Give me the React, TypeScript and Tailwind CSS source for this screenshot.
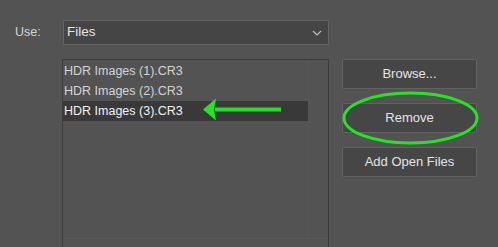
import React from 'react';

const files = ['HDR Images (1).CR3', 'HDR Images (2).CR3', 'HDR Images (3).CR3'];

export default function App() {
  const selected = 2;

  return (
    <div
      className="w-[498px] h-[247px] bg-[#535353] overflow-hidden text-[#d4d4d4] text-[12.5px]"
      style={{ fontFamily: '"Liberation Sans", Arial, sans-serif' }}
    >
      {/* Use row */}
      <div className="flex items-center pt-[20px]">
        <div className="w-[63px] pl-[15px]">Use:</div>
        <div className="w-[266px] h-[25px] bg-[#454545] border border-[#626262] flex items-center justify-between pl-[3px] pr-[6px] text-[13.5px] text-[#e6e6e6]">
          <span>Files</span>
          <svg width="10" height="6" viewBox="0 0 10 6" fill="none">
            <path d="M1 1l4 4 4-4" stroke="#bdbdbd" strokeWidth="1.2" />
          </svg>
        </div>
      </div>

      <div className="flex mt-[14px]">
        {/* File list */}
        <div className="ml-[62px] w-[267px] h-[200px] border border-[#3d3d3d] flex flex-col relative">
          <div className="flex-1 flex">
            <div className="w-[245px] pt-[1px]">
              {files.map((f, i) => (
                <div
                  key={f}
                  className={`h-[20px] flex items-center pl-[1px] ${
                    i === selected ? 'bg-[#393939] text-[#f2f2f2]' : ''
                  }`}
                >
                  {f}
                </div>
              ))}
            </div>
            <div className="flex-1 border-l border-[#575757]" />
          </div>
          <div className="h-[20px] border-t border-[#575757]" />

          {/* green arrow */}
          <svg className="absolute left-[138px] top-[37px]" width="82" height="26" viewBox="0 0 82 26">
            <path d="M80 12.5H14" stroke="#1ee81e" strokeWidth="4" />
            <path d="M2 12.5L15 1.5L13 12.5L15 23.5Z" fill="#1ee81e" />
          </svg>
        </div>

        {/* Buttons */}
        <div className="ml-[13px] w-[135px] flex flex-col gap-[14px] relative">
          {['Browse...', 'Remove', 'Add Open Files'].map((b) => (
            <button
              key={b}
              className="h-[30px] bg-[#464646] border border-[#626262] rounded-[2px] text-[#e4e4e4] text-[13px]"
            >
              {b}
            </button>
          ))}

          {/* green ellipse */}
          <svg className="absolute left-[0px] top-[32px]" width="138" height="55" viewBox="0 0 138 55">
            <ellipse cx="68.5" cy="27" rx="66.5" ry="25" fill="none" stroke="#1ee81e" strokeWidth="3" />
          </svg>
        </div>
      </div>
    </div>
  );
}
